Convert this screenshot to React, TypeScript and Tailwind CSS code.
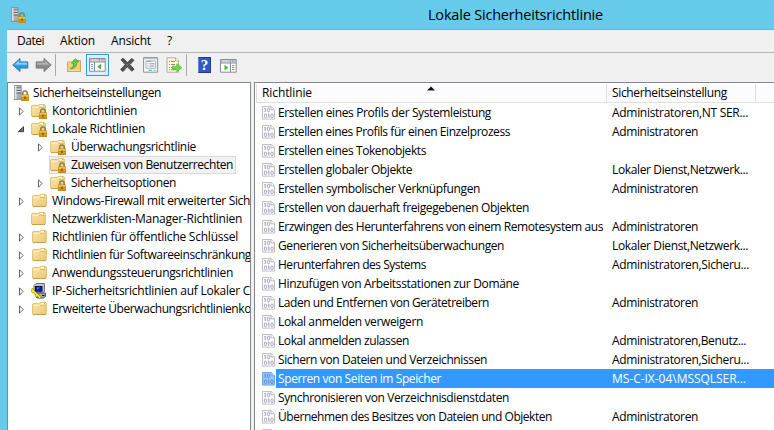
import { useLayoutEffect, useRef, useState } from "react";

// Text whose tracking is adjusted so that it takes up the given width.
function Label({ text, width, className = "" }: { text: string; width: number; className?: string }) {
  const ref = useRef<HTMLSpanElement>(null);
  const [spacing, setSpacing] = useState(0);
  useLayoutEffect(() => {
    const natural = ref.current!.getBoundingClientRect().width;
    setSpacing((width - natural) / text.length);
  }, [text, width]);
  return (
    <span ref={ref} className={`inline-block shrink-0 whitespace-pre ${className}`} style={{ letterSpacing: `${spacing}px` }}>
      {text}
    </span>
  );
}

function Lock() {
  return (
    <g>
      <path d="M9.8 10V8.2a2.2 2.2 0 0 1 4.4 0V10" fill="none" stroke="#8c7a50" strokeWidth="1.5" />
      <rect x="8" y="9.5" width="8" height="6.5" fill="#c48a16" />
      <rect x="8.5" y="10" width="7" height="2" fill="#edc04c" />
      <rect x="8.5" y="13" width="7" height="1.3" fill="#dfa42b" />
      <rect x="11.3" y="11.5" width="1.4" height="2.5" fill="#7a520c" />
    </g>
  );
}

function Folder({ locked = false }: { locked?: boolean }) {
  return (
    <svg width="16" height="16" viewBox="0 0 16 16" className="shrink-0">
      <defs>
        <linearGradient id="folder" x1="0" y1="0" x2="1" y2="1">
          <stop offset="0" stopColor="#fbe7ae" />
          <stop offset="1" stopColor="#ecc66f" />
        </linearGradient>
      </defs>
      <path d="M.6 12.9V3l.6-.6h6l1-1h5.2l.9.9v10.6l-.6.7H1.2z" fill="url(#folder)" stroke="#dbb969" strokeWidth=".9" />
      <path d="M9 2.6h4.4" stroke="#fff" strokeWidth="1.2" />
      <path d="M12 2.6h1.4" stroke="#8db4c4" strokeWidth="1" />
      <path d="M1.5 4.4h6.3l1-.9h4.8" stroke="#fff4cf" strokeWidth=".8" fill="none" />
      <path d="M7.8 5.1l1-.9h5" stroke="#cda653" strokeWidth=".7" fill="none" />
      <path d="M1 13.5h13" stroke="#c39c49" strokeWidth=".9" />
      {locked && <Lock />}
    </svg>
  );
}

function ServerLock({ size = 16 }: { size?: number }) {
  return (
    <svg width={size} height={size} viewBox="0 0 16 16" className="shrink-0">
      <path d="M1.7.5h6.6v13.6H1.7z" fill="#aab0b4" stroke="#858d93" strokeWidth=".8" />
      <path d="M2 1h1.6v13H2z" fill="#dfe3e5" />
      <path d="M3.5 3h4.3M3.5 5.5h4.3M3.5 8h4.3" stroke="#596168" strokeWidth="1" />
      <path d="M3.5 4h4.3M3.5 6.5h4.3" stroke="#f5f7f8" strokeWidth=".8" />
      <path d="M.6 14.4h8" stroke="#899096" />
      <Lock />
    </svg>
  );
}

function IpSecurity() {
  return (
    <svg width="16" height="16" viewBox="0 0 16 16" className="shrink-0">
      <path d="M3 2.5L5 .5h8.5v8l-2 1.5H3z" fill="#bfc3c7" stroke="#555" strokeWidth=".8" />
      <path d="M4 3h7.5v5.8H4z" fill="#101030" />
      <path d="M5 4h5.5v4H5z" fill="#0b18c9" />
      <path d="M6 4.5h3l-3 2z" fill="#6b8df0" />
      <path d="M4 11.5L6 10h8.5v3.5L12.5 15H6z" fill="#aaa" stroke="#333" strokeWidth=".8" />
      <path d="M11 12.5h2.5" stroke="#111" />
      <path d="M.5 5.8l2 2.5L8 13.5M.5 8.5h3M8 13.5l1.3 1M6 12l-1.5 1.5" fill="none" stroke="#77720b" strokeWidth="2.6" />
      <path d="M.5 5.8l2 2.5L8 13.5M.5 8.5h3M8 13.5l1.3 1M6 12l-1.5 1.5" fill="none" stroke="#fff000" strokeWidth="1.7" />
    </svg>
  );
}

function Expander({ open }: { open?: boolean }) {
  return (
    <svg width="6" height="10" viewBox="0 0 6 10" className="shrink-0 overflow-visible">
      {open ? (
        <path d="M5.5 2.7v5H.3z" fill="#707070" stroke="#333" strokeWidth=".9" />
      ) : (
        <path d="M1.5 1.8v7.4l3.6-3.7z" fill="#fff" stroke="#555" strokeWidth=".9" />
      )}
    </svg>
  );
}

function PolicyIcon({ selected = false }: { selected?: boolean }) {
  const ink = selected ? "#5589d2" : "#9d9bb2";
  return (
    <svg width="14" height="16" viewBox="0 0 14 16" className="shrink-0">
      <path d="M.5 1.5h8.8l3.2 3.2v9.4H.5z" fill={selected ? "#94c8f8" : "#fcfcfc"} stroke={selected ? "#71a7df" : "#c0c0c0"} />
      <path d="M9 1.5v3.3h3.5" fill={selected ? "#b3daff" : "#fff"} stroke={selected ? "#71a7df" : "#aaa"} strokeWidth=".8" />
      <path d="M3.2 3v4M2.5 3.5l.7-.5M6.8 8.8v4M6.1 9.3l.7-.5" fill="none" stroke={ink} strokeWidth="1" />
      <rect x="5.4" y="3.2" width="2.2" height="3.6" rx="1" fill="none" stroke={ink} strokeWidth=".9" />
      <rect x="2.4" y="9" width="2.2" height="3.6" rx="1" fill="none" stroke={ink} strokeWidth=".9" />
      <rect x="8.9" y="9" width="2.2" height="3.6" rx="1" fill="none" stroke={ink} strokeWidth=".9" />
    </svg>
  );
}

function Arrow({ back = false }: { back?: boolean }) {
  return (
    <svg width="17" height="16" viewBox="0 0 17 16" className="shrink-0">
      <g transform={back ? undefined : "translate(17 0) scale(-1 1)"}>
        <path d="M.8 8L8 1.5v3.4h7.8v6.2H8v3.4z" fill={back ? "#2b9be2" : "#8b8b8b"} stroke={back ? "#3779ad" : "#767676"} strokeWidth="1" strokeLinejoin="round" />
        <path d="M2.2 7.8L7.2 3.2v2.6h7.8v2z" fill={back ? "#80d1f8" : "#b2b2b2"} />
      </g>
    </svg>
  );
}

function UpFolder() {
  return (
    <svg width="16" height="16" viewBox="0 0 16 16" className="shrink-0">
      <path d="M1.5 14.5V5h5l1-1.5h7v11z" fill="#efce7b" stroke="#c6a158" strokeWidth=".9" />
      <path d="M2.3 6.3h5L8.4 5h5.5M2.3 13.4h11" fill="none" stroke="#fae6aa" strokeWidth=".9" />
      <path d="M4.2 11.8c2.7-1.2 3.4-3 3.4-5.5H5.4L9.3 1.7 13 4.8l-2.4 1c.3 3.2-2.1 6.3-6.4 6z" fill="#62cf34" stroke="#4da336" strokeWidth=".8" />
    </svg>
  );
}

function PaneIcon({ action = false }: { action?: boolean }) {
  return (
    <svg width="17" height="14" viewBox="0 0 17 14" className="shrink-0">
      <path d="M.5.5h15.7v12.7H.5z" fill="#fff" stroke="#858d95" />
      <path d="M1 1h14.7v2.4H1z" fill="#a5adb4" />
      <path d="M1.5 2h8M11 2h1M13.5 2h1" stroke="#f6f7f8" />
      <path d="M1 4h15" stroke="#858d95" />
      <path d={action ? "M10.5 4v9" : "M5.5 4v9"} stroke="#858d95" />
      <path d={action ? "M12 6.5h2.5M12 8.5h2.5M12 10.5h2.5" : "M2 6.5h2M2 8.5h2M2 10.5h2"} stroke="#4f9ecc" />
      <path d={action ? "M4.5 5.8v5.8l3.8-2.9z" : "M12 5.8v5.8L8.2 8.7z"} fill="#44b633" />
    </svg>
  );
}

function DeleteIcon() {
  return (
    <svg width="17" height="16" viewBox="0 0 17 16" className="shrink-0">
      <path d="M2 2.8l2-1.5 4.6 4.3 4-4.1L15 3.3l-4.2 4.3 4.3 4.6-2.2 2-4.6-4.4L4 14.5l-2.3-2 4.6-4.8z" fill="#484848" stroke="#404040" strokeWidth=".9" />
      <path d="M3.2 2.8L13 12.6M13.5 3L4.5 12" stroke="#777" strokeWidth="1" />
    </svg>
  );
}

function Properties() {
  return (
    <svg width="16" height="16" viewBox="0 0 16 16" className="shrink-0">
      <path d="M.6.6h14v14.6H.6z" fill="#f8fafb" stroke="#8c9398" />
      <path d="M1.1 1.7h13" stroke="#b7bdc3" strokeWidth="1.2" />
      <path d="M3 4h9.6v7.2H3z" fill="#fff" stroke="#a6b1bd" />
      <path d="M3.5 4.3h5" stroke="#7f9cc3" />
      <path d="M4.5 6.8h1M6.5 6.8h5M4.5 9h1M6.5 9h5" stroke="#828d98" />
      <path d="M5.7 13.3h3" stroke="#42c0ed" strokeWidth="1.4" />
      <path d="M10 13.3h3" stroke="#a6d8e8" strokeWidth="1.4" />
    </svg>
  );
}

function ExportList() {
  return (
    <svg width="17" height="16" viewBox="0 0 17 16" className="shrink-0">
      <path d="M1 .8h8.5l3 3v11.4H1z" fill="#fff8d8" stroke="#b2ad9b" />
      <path d="M9.5 1v3h3" fill="#fff" stroke="#a9a38e" strokeWidth=".8" />
      <path d="M3 4.5h1M5 4.5h4M3 7.5h1M5 7.5h4M3 10.5h1M5 10.5h3M3 12.7h1M5 12.7h5" stroke="#857e70" strokeWidth=".9" />
      <path d="M6.5 9.2h4.3V6.7l5 4-5 4v-2.4H6.5z" fill="#6ed83f" stroke="#53b338" strokeWidth=".7" />
    </svg>
  );
}

function HelpIcon() {
  return (
    <div className="flex h-4 w-[13px] shrink-0 items-center justify-center border border-[#203b8d] border-l-[#6583d2] bg-[#3159c4] font-['Liberation_Serif',serif] text-[15px] leading-[15px] font-bold text-white">
      ?
    </div>
  );
}

type Node = { text: string; width: number; level: number; icon: "server" | "locked" | "folder" | "ip"; state?: "open" | "closed"; selected?: boolean };

const nodes: Node[] = [
  { text: "Sicherheitseinstellungen", width: 128, level: 0, icon: "server" },
  { text: "Kontorichtlinien", width: 85, level: 1, icon: "locked", state: "closed" },
  { text: "Lokale Richtlinien", width: 93, level: 1, icon: "locked", state: "open" },
  { text: "Überwachungsrichtlinie", width: 125, level: 2, icon: "locked", state: "closed" },
  { text: "Zuweisen von Benutzerrechten", width: 162, level: 2, icon: "locked", selected: true },
  { text: "Sicherheitsoptionen", width: 105, level: 2, icon: "locked", state: "closed" },
  { text: "Windows-Firewall mit erweiterter Sich", width: 198, level: 1, icon: "folder", state: "closed" },
  { text: "Netzwerklisten-Manager-Richtlinien", width: 190, level: 1, icon: "folder" },
  { text: "Richtlinien für öffentliche Schlüssel", width: 186, level: 1, icon: "folder", state: "closed" },
  { text: "Richtlinien für Softwareeinschränkung", width: 199, level: 1, icon: "folder", state: "closed" },
  { text: "Anwendungssteuerungsrichtlinien", width: 181, level: 1, icon: "folder", state: "closed" },
  { text: "IP-Sicherheitsrichtlinien auf Lokaler C", width: 198, level: 1, icon: "ip", state: "closed" },
  { text: "Erweiterte Überwachungsrichtlinienko", width: 199, level: 1, icon: "folder", state: "closed" },
];

type Policy = [string, number, string, number];

const policies: Policy[] = [
  ["Erstellen eines Profils der Systemleistung", 213, "Administratoren,NT SER...", 136],
  ["Erstellen eines Profils für einen Einzelprozess", 232, "Administratoren", 86],
  ["Erstellen eines Tokenobjekts", 148, "", 0],
  ["Erstellen globaler Objekte", 134, "Lokaler Dienst,Netzwerk...", 136],
  ["Erstellen symbolischer Verknüpfungen", 202, "Administratoren", 86],
  ["Erstellen von dauerhaft freigegebenen Objekten", 251, "", 0],
  ["Erzwingen des Herunterfahrens von einem Remotesystem aus", 325, "Administratoren", 86],
  ["Generieren von Sicherheitsüberwachungen", 226, "Lokaler Dienst,Netzwerk...", 136],
  ["Herunterfahren des Systems", 148, "Administratoren,Sicheru...", 137],
  ["Hinzufügen von Arbeitsstationen zur Domäne", 241, "", 0],
  ["Laden und Entfernen von Gerätetreibern", 211, "Administratoren", 86],
  ["Lokal anmelden verweigern", 145, "", 0],
  ["Lokal anmelden zulassen", 131, "Administratoren,Benutz...", 134],
  ["Sichern von Dateien und Verzeichnissen", 209, "Administratoren,Sicheru...", 137],
  ["Sperren von Seiten im Speicher", 163, "MS-C-IX-04\\MSSQLSER...", 134],
  ["Synchronisieren von Verzeichnisdienstdaten", 231, "", 0],
  ["Übernehmen des Besitzes von Dateien und Objekten", 274, "Administratoren", 86],
];

function TreeRow({ node }: { node: Node }) {
  const indent = node.level === 0 ? "pl-[5px]" : node.level === 1 ? "pl-[10px]" : "pl-[29px]";
  return (
    <div className={`flex h-[18px] items-center ${indent}`}>
      {node.level > 0 && (
        <div className={`flex shrink-0 ${node.icon === "folder" && node.state ? "w-[14px]" : "w-[13px]"}`}>
          {node.state && <Expander open={node.state === "open"} />}
        </div>
      )}
      <div className={`flex h-[18px] shrink-0 items-center ${node.selected ? "-ml-px border border-[#d9d9d9] bg-[#f2f2f2]" : ""}`}>
        {node.icon === "server" && <ServerLock />}
        {node.icon === "ip" && <IpSecurity />}
        {(node.icon === "folder" || node.icon === "locked") && <Folder locked={node.icon === "locked"} />}
        <Label text={node.text} width={node.width} className={`mb-px ${node.icon === "folder" && node.state ? "ml-[4px]" : node.level === 0 ? "ml-1" : "ml-[5px]"} ${node.selected ? "mr-0.5" : ""}`} />
      </div>
    </div>
  );
}

function PolicyRow({ policy: [name, width, setting, settingWidth] }: { policy: Policy }) {
  const selected = name.startsWith("Sperren");
  return (
    <div className="flex h-[19px] shrink-0 items-center pl-[7px]">
      <PolicyIcon selected={selected} />
      <div className={`flex h-[19px] grow items-center pl-0.5 ${selected ? "bg-[#3399ff] text-white" : ""}`}>
        <div className="flex w-[334px] shrink-0">
          <Label text={name} width={width} />
        </div>
        {setting && <Label text={setting} width={settingWidth} />}
      </div>
    </div>
  );
}

export default function App() {
  return (
    <div className="flex h-[430px] w-[774px] flex-col overflow-hidden bg-[#66caeb] font-['Open_Sans','Noto_Sans',sans-serif] text-[12px] leading-[18px] text-black">
      <header className="flex h-[29px] shrink-0 items-center pl-[10px]">
        <ServerLock size={16} />
        <Label text="Lokale Sicherheitsrichtlinie" width={175} className="ml-[402px] text-[14.5px]" />
      </header>
      <div className="ml-[7px] flex min-h-0 grow flex-col border-t border-[#74b4cc] bg-[#f0f0f0]">
        <nav className="flex h-[22px] shrink-0 items-center pl-[10px]">
          <Label text="Datei" width={27} />
          <Label text="Aktion" width={35} className="ml-4" />
          <Label text="Ansicht" width={40} className="ml-4" />
          <Label text="?" width={6} className="ml-4" />
        </nav>
        <div className="flex h-[30px] shrink-0 items-center border-t border-[#b4b4b4] pb-[5px] pl-[5px]">
          <Arrow back />
          <div className="w-[6px]" />
          <Arrow />
          <div className="mr-[10px] ml-[3px] h-[22px] w-px bg-[#aaa]" />
          <UpFolder />
          <div className="mr-[10px] ml-1 flex h-[22px] w-[23px] shrink-0 items-center justify-center border border-[#3399d8] bg-[#dceefa]">
            <PaneIcon />
          </div>
          <DeleteIcon />
          <div className="w-[7px]" />
          <Properties />
          <div className="w-[7px]" />
          <ExportList />
          <div className="mr-[11px] ml-[3px] h-[22px] w-px bg-[#aaa]" />
          <HelpIcon />
          <div className="w-[9px]" />
          <div className="pt-0.5">
            <PaneIcon action />
          </div>
        </div>
        <main className="flex min-h-0 grow">
          <aside className="w-[244px] shrink-0 overflow-hidden border-t border-r border-l border-[#828790] bg-white pt-px">
            {nodes.map((node) => (
              <TreeRow key={node.text} node={node} />
            ))}
          </aside>
          <section className="ml-[3px] flex min-w-0 grow flex-col overflow-hidden border-t border-l border-[#828790] bg-white">
            <div className="relative mt-px ml-px flex h-[19px] shrink-0 border-b border-[#e0e0e0] bg-[#fcfcfc]">
              <div className="flex w-[351px] shrink-0 items-center border-r border-l border-[#dedede] pl-[5px]">
                <Label text="Richtlinie" width={50} />
              </div>
              <div className="flex w-[149px] shrink-0 items-center border-r border-[#dedede] pl-[5px]">
                <Label text="Sicherheitseinstellung" width={115} />
              </div>
              <svg className="absolute top-[2px] left-[171px]" width="8" height="5" viewBox="0 0 8 5">
                <path d="M0 4.5L4 .5l4 4z" fill="#111" />
              </svg>
            </div>
            {policies.map((policy) => (
              <PolicyRow key={policy[0]} policy={policy} />
            ))}
            <div className="flex h-[19px] shrink-0 items-center pl-[7px]">
              <PolicyIcon />
            </div>
          </section>
        </main>
      </div>
    </div>
  );
}
